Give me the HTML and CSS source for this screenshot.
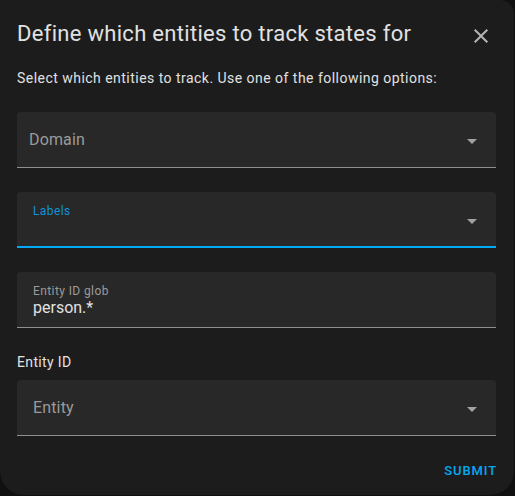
FILE: index.html
```html
<!DOCTYPE html>
<html lang="en">
<head>
<meta charset="utf-8">
<title>Define entities</title>
<link rel="stylesheet" href="styles.css">
</head>
<body>
<div class="dialog">
  <div class="header">
    <h2 class="title">Define which entities to track states for</h2>
    <button class="close" aria-label="Close">
      <svg viewBox="0 0 24 24" width="24" height="24"><path d="M19,6.41L17.59,5L12,10.59L6.41,5L5,6.41L10.59,12L5,17.59L6.41,19L12,13.41L17.59,19L19,17.59L13.41,12L19,6.41Z" fill="currentColor"/></svg>
    </button>
  </div>
  <p class="intro">Select which entities to track. Use one of the following options:</p>

  <div class="field field-select">
    <span class="placeholder placeholder-domain">Domain</span>
    <span class="arrow"></span>
  </div>

  <div class="field field-focused">
    <span class="float-label float-label-focused">Labels</span>
    <span class="arrow"></span>
  </div>

  <div class="field field-text">
    <span class="float-label">Entity ID glob</span>
    <span class="value">person.*</span>
  </div>

  <div class="section-label">Entity ID</div>

  <div class="field field-entity">
    <span class="placeholder">Entity</span>
    <span class="arrow"></span>
  </div>

  <div class="actions">
    <button class="submit">Submit</button>
  </div>
</div>
</body>
</html>
```

FILE: styles.css
```css
html, body {
  margin: 0;
  padding: 0;
  background: #101010;
  width: 515px;
  height: 496px;
  overflow: hidden;
}

body {
  font-family: Roboto, "Noto Sans", sans-serif;
  color: #e1e1e1;
}

.dialog {
  box-sizing: border-box;
  width: 514px;
  height: 495px;
  background: #1c1c1c;
  border-radius: 0 14px 24px 24px;
  padding: 20px 18px 0 17px;
  display: flex;
  flex-direction: column;
}

.header {
  display: flex;
  align-items: flex-start;
  justify-content: space-between;
  height: 28px;
}

.title {
  margin: 0;
  padding-left: 0;
  font-size: 22px;
  line-height: 28px;
  font-weight: 400;
  letter-spacing: 0.3px;
  color: #e1e1e1;
  white-space: nowrap;
}

.close {
  background: none;
  border: 0;
  padding: 0;
  margin: 4px 3px 0 0;
  width: 24px;
  height: 24px;
  color: #b4b4b4;
  display: flex;
}

.intro {
  margin: 20px 0 0 0;
  font-size: 14px;
  line-height: 20px;
  letter-spacing: 0.47px;
  color: #e1e1e1;
}

.field {
  position: relative;
  box-sizing: border-box;
  height: 56px;
  margin-top: 24px;
  background: #282828;
  border-radius: 4px 4px 0 0;
  border-bottom: 1px solid #8f8f8f;
  padding: 0 16px;
  display: flex;
  flex-direction: column;
  justify-content: center;
}

.field-focused {
  border-bottom: 2px solid #03a9f4;
}

.placeholder {
  font-size: 16px;
  line-height: 20px;
  color: #9b9b9b;
  letter-spacing: 0.15px;
}

.placeholder-domain {
  margin-left: -4px;
}

.float-label {
  position: absolute;
  left: 16px;
  top: 12px;
  font-size: 12px;
  line-height: 14px;
  color: #9b9b9b;
  letter-spacing: 0.4px;
}

.float-label-focused {
  color: #1292d6;
}

.value {
  margin-top: 16px;
  font-size: 16px;
  line-height: 20px;
  color: #e1e1e1;
}

.arrow {
  position: absolute;
  right: 19px;
  top: 27px;
  width: 0;
  height: 0;
  border-left: 5px solid transparent;
  border-right: 5px solid transparent;
  border-top: 5px solid #a2a2a2;
}

.section-label {
  margin-top: 24px;
  font-size: 14px;
  line-height: 20px;
  letter-spacing: 0.35px;
  color: #e1e1e1;
}

.field-entity {
  margin-top: 8px;
}

.actions {
  display: flex;
  justify-content: flex-end;
  margin-top: 16px;
}

.submit {
  background: none;
  border: 0;
  padding: 0;
  height: 36px;
  font-family: Roboto, "Noto Sans", sans-serif;
  font-size: 13px;
  font-weight: 500;
  letter-spacing: 0.9px;
  text-transform: uppercase;
  color: #03a9f4;
  margin-right: -1px;
}
```
